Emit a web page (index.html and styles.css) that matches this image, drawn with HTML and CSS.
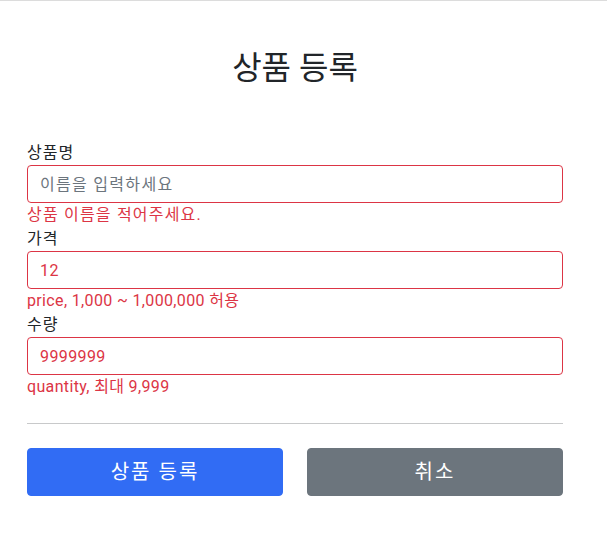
FILE: index.html
```html
<!DOCTYPE html>
<html lang="ko">
<head>
<meta charset="utf-8">
<title>상품 등록</title>
<link rel="stylesheet" href="styles.css">
</head>
<body>
<div class="container">
  <div class="header">
    <h2 class="title">상품 등록</h2>
  </div>
  <form class="form">
    <div class="field">
      <label class="label" for="itemName">상품명</label>
      <input class="control is-error" id="itemName" type="text" placeholder="이름을 입력하세요">
      <div class="field-error field-error-ko">상품 이름을 적어주세요.</div>
    </div>
    <div class="field">
      <label class="label" for="price">가격</label>
      <input class="control is-error" id="price" type="text" value="12">
      <div class="field-error">price, 1,000 ~ 1,000,000 허용</div>
    </div>
    <div class="field">
      <label class="label" for="quantity">수량</label>
      <input class="control is-error" id="quantity" type="text" value="9999999">
      <div class="field-error">quantity, 최대 9,999</div>
    </div>
    <hr class="divider">
    <div class="actions">
      <button class="btn btn-primary" type="submit">상품 등록</button>
      <button class="btn btn-secondary" type="button">취소</button>
    </div>
  </form>
</div>
</body>
</html>
```
FILE: styles.css
```css
* { box-sizing: border-box; }
html, body { margin: 0; padding: 0; }
body {
  border-top: 1px solid #dcdcdc;
  font-family: Roboto, "Noto Sans CJK KR", sans-serif;
  font-size: 16px;
  line-height: 1.5;
  color: #212529;
  background: #fff;
}
.container {
  width: 560px;
  margin-left: 15px;
  padding: 0 12px;
}
.header {
  padding: 48px 0 54px;
  text-align: center;
}
.title {
  margin: 0;
  font-size: 32px;
  font-weight: 400;
  line-height: 1.2;
}
.form { margin: 0; }
.field { display: flex; flex-direction: column; }
.label { display: block; letter-spacing: 1px; }
.control {
  display: block;
  width: 100%;
  height: 38px;
  padding: 6px 12px;
  font: inherit;
  line-height: 1.5;
  letter-spacing: 0.4px;
  color: #212529;
  background: #fff;
  border: 1px solid #ced4da;
  border-radius: 4px;
  outline: none;
}
.control::placeholder { color: #6c757d; opacity: 1; letter-spacing: 1.3px; }
.is-error { border-color: #dc3545; color: #dc3545; }
.field-error { color: #dc3545; letter-spacing: 0.35px; }
.field-error-ko { letter-spacing: 1.2px; }
.divider {
  margin: 24px 0;
  border: 0;
  border-top: 1px solid #c8c9ca;
  height: 0;
}
.actions {
  display: grid;
  grid-template-columns: 1fr 1fr;
  column-gap: 24px;
}
.btn {
  height: 48px;
  padding: 8px 16px;
  font-family: inherit;
  font-size: 20px;
  line-height: 1.5;
  letter-spacing: 2px;
  color: #fff;
  border: 1px solid transparent;
  border-radius: 4px;
  cursor: pointer;
}
.btn-primary { background: #316cf4; border-color: #316cf4; }
.btn-secondary { background: #6c757d; border-color: #6c757d; }
```
